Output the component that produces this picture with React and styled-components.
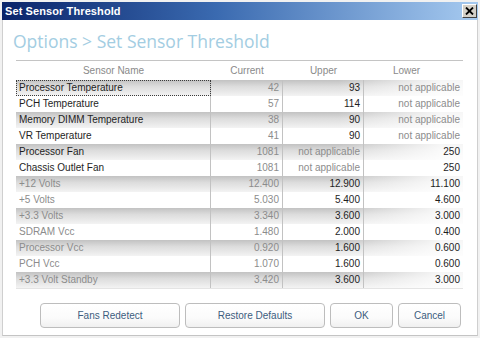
import React from "react";
import styled, { createGlobalStyle } from "styled-components";

const Global = createGlobalStyle`
  html, body { margin: 0; padding: 0; background: #ffffff; }
  body { font-family: "Liberation Sans", Arial, sans-serif; }
  * { box-sizing: border-box; }
`;

const Frame = styled.div`
  width: 480px;
  height: 338px;
  background: #f1f1f1;
  padding: 2px;
  display: flex;
  flex-direction: column;
`;

const TitleBar = styled.div`
  height: 18px;
  flex: none;
  display: flex;
  align-items: center;
  justify-content: space-between;
  padding: 0 1px 0 3px;
  background: linear-gradient(to right, #0a246a 0%, #3a6ab0 45%, #a6caf0 100%);
`;

const TitleText = styled.span`
  color: #ffffff;
  font: bold 11px "Liberation Sans", Arial, sans-serif;
  letter-spacing: 0.1px;
`;

const CloseButton = styled.div`
  width: 15px;
  height: 14px;
  background: #d4d0c8;
  border-top: 1px solid #ffffff;
  border-left: 1px solid #ffffff;
  border-right: 1px solid #404040;
  border-bottom: 1px solid #404040;
  display: flex;
  align-items: center;
  justify-content: center;
`;

const Body = styled.div`
  flex: 1;
  background: #ffffff;
  border-left: 1px solid #cfcfcf;
  border-right: 1px solid #cfcfcf;
  border-bottom: 1px solid #c4c4c4;
  display: flex;
  flex-direction: column;
`;

const Heading = styled.div`
  margin: 10px 0 0 10px;
  height: 23px;
  line-height: 23px;
  font-family: "Open Sans", "Liberation Sans", sans-serif;
  font-size: 17.5px;
  color: #a3cde2;
`;

const Table = styled.div`
  margin: 7px 0 0 13px;
  width: 447px;
  display: flex;
  flex-direction: column;
  border-bottom: 1px solid #e4e4e4;
`;

const Grid = styled.div`
  display: grid;
  grid-template-columns: 195px 72px 81px 99px;
`;

const HeaderRow = styled(Grid)`
  height: 20px;
  border-top: 1px solid #c4c4c4;
  align-items: center;
  color: #8a8a8a;
  font-size: 10px;
`;

const HeaderCell = styled.div`
  text-align: center;
  padding-right: ${(p) => p.$pr || 0}px;
`;

const Row = styled(Grid)`
  height: 16px;
  background: ${(p) =>
    p.$shaded
      ? "linear-gradient(to right, rgba(255,255,255,0) 0%, rgba(255,255,255,0) 72%, rgba(255,255,255,0.85) 95%), linear-gradient(to bottom, #c2c2c2 0%, #dcdcdc 40%, #f3f3f3 100%)"
      : "#ffffff"};
`;

const Cell = styled.div`
  font-size: 10px;
  line-height: 16px;
  height: 16px;
  white-space: nowrap;
  overflow: hidden;
  color: ${(p) => (p.$dim ? "#8c8c8c" : "#1e1e1e")};
  text-align: ${(p) => (p.$left ? "left" : "right")};
  padding: ${(p) => (p.$left ? "0 0 0 3px" : "0 3px 0 0")};
  border-right: ${(p) => (p.$sep ? "1px solid #c2c2c2" : "none")};
  outline: ${(p) => (p.$focus ? "1px dotted #3a3a3a" : "none")};
  outline-offset: -1px;
`;

const ButtonRow = styled.div`
  display: flex;
  gap: 5px;
  margin: 14px 0 0 37px;
`;

const Button = styled.button`
  width: ${(p) => p.$w}px;
  height: 25px;
  padding: 0;
  border: 1px solid #bdbdbd;
  border-radius: 4px;
  background: linear-gradient(to bottom, #ffffff 0%, #fbfbfb 60%, #f0f0f0 100%);
  color: #3d5d7e;
  font: 10px "Liberation Sans", Arial, sans-serif;
`;

const NA = "not applicable";

const rows = [
  { name: "Processor Temperature", cur: "42", up: "93", low: NA, focus: true },
  { name: "PCH Temperature", cur: "57", up: "114", low: NA },
  { name: "Memory DIMM Temperature", cur: "38", up: "90", low: NA },
  { name: "VR Temperature", cur: "41", up: "90", low: NA },
  { name: "Processor Fan", cur: "1081", up: NA, low: "250" },
  { name: "Chassis Outlet Fan", cur: "1081", up: NA, low: "250" },
  { name: "+12 Volts", cur: "12.400", up: "12.900", low: "11.100", dim: true },
  { name: "+5 Volts", cur: "5.030", up: "5.400", low: "4.600", dim: true },
  { name: "+3.3 Volts", cur: "3.340", up: "3.600", low: "3.000", dim: true },
  { name: "SDRAM Vcc", cur: "1.480", up: "2.000", low: "0.400", dim: true },
  { name: "Processor Vcc", cur: "0.920", up: "1.600", low: "0.600", dim: true },
  { name: "PCH Vcc", cur: "1.070", up: "1.600", low: "0.600", dim: true },
  { name: "+3.3 Volt Standby", cur: "3.420", up: "3.600", low: "3.000", dim: true },
];

export default function App() {
  return (
    <>
      <Global />
      <Frame>
        <TitleBar>
          <TitleText>Set Sensor Threshold</TitleText>
          <CloseButton>
            <svg width="9" height="8" viewBox="0 0 9 8">
              <path d="M1 0.5 L8 7.5 M8 0.5 L1 7.5" stroke="#000" strokeWidth="1.8" />
            </svg>
          </CloseButton>
        </TitleBar>
        <Body>
          <Heading>Options &gt; Set Sensor Threshold</Heading>
          <Table>
            <HeaderRow>
              <HeaderCell>Sensor Name</HeaderCell>
              <HeaderCell>Current</HeaderCell>
              <HeaderCell>Upper</HeaderCell>
              <HeaderCell $pr={14}>Lower</HeaderCell>
            </HeaderRow>
            {rows.map((r, i) => (
              <Row key={r.name} $shaded={i % 2 === 0}>
                <Cell $left $sep $dim={r.dim} $focus={r.focus}>
                  {r.name}
                </Cell>
                <Cell $sep $dim>
                  {r.cur}
                </Cell>
                <Cell $sep $dim={r.up === NA}>
                  {r.up}
                </Cell>
                <Cell $dim={r.low === NA}>{r.low}</Cell>
              </Row>
            ))}
          </Table>
          <ButtonRow>
            <Button $w={140}>Fans Redetect</Button>
            <Button $w={140}>Restore Defaults</Button>
            <Button $w={63}>OK</Button>
            <Button $w={63}>Cancel</Button>
          </ButtonRow>
        </Body>
      </Frame>
    </>
  );
}
